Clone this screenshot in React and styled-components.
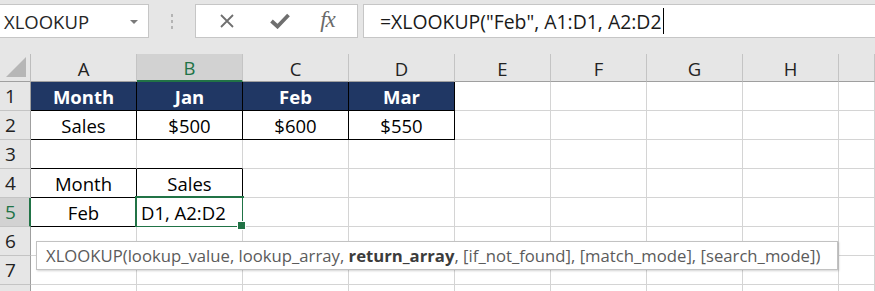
import React from "react"
import styled, { createGlobalStyle, css } from "styled-components"

const GREEN = "#217346"
const NAVY = "#203764"
const GRID = "#d4d4d4"
const HEAD_BG = "#e6e6e6"
const HEAD_SEL = "#d2d2d2"

const GlobalStyle = createGlobalStyle`
  body {
    margin: 0;
    background: #fff;
    font-family: "Open Sans", "Liberation Sans", sans-serif;
  }
  * { box-sizing: border-box; }
`

const Page = styled.div`
  position: relative;
  width: 875px;
  height: 291px;
  overflow: hidden;
  display: flex;
  flex-direction: column;
`

const FormulaBar = styled.div`
  height: 54px;
  flex: none;
  background: ${HEAD_BG};
  display: flex;
  align-items: flex-start;
  padding-top: 4px;
`

const NameBox = styled.div`
  width: 149px;
  height: 34px;
  background: #fff;
  border: 1px solid #c6c6c6;
  border-left: none;
  display: flex;
  align-items: center;
  justify-content: space-between;
  padding: 0 10px 0 4px;
  font-size: 18.5px;
  color: #262626;
`

const DropArrow = styled.span`
  width: 0;
  height: 0;
  border-left: 4px solid transparent;
  border-right: 4px solid transparent;
  border-top: 4px solid #7a7a7a;
  margin-top: 1px;
`

const Splitter = styled.div`
  width: 46px;
  height: 34px;
  display: flex;
  flex-direction: column;
  align-items: center;
  justify-content: center;
  gap: 3px;
`

const Dot = styled.span`
  width: 2px;
  height: 3px;
  background: #b4b4b4;
`

const IconBox = styled.div`
  width: 163px;
  height: 34px;
  background: #fff;
  border: 1px solid #c6c6c6;
  display: grid;
  grid-template-columns: 54px 52px 1fr;
  align-items: center;
  justify-items: center;
  padding-left: 4px;
`

const Fx = styled.span`
  font-family: "Liberation Serif", "DejaVu Serif", serif;
  font-style: italic;
  font-size: 23px;
  color: #6a6a6a;
  margin-left: -8px;
  margin-top: -2px;
  letter-spacing: -1px;
`

const FormulaInput = styled.div`
  flex: 1;
  height: 34px;
  margin-left: 5px;
  background: #fff;
  border: 1px solid #c6c6c6;
  border-right: none;
  display: flex;
  align-items: center;
  padding-left: 16px;
  font-size: 19.4px;
  color: #1a1a1a;
  white-space: pre;
`

const Caret = styled.span`
  width: 1px;
  height: 26px;
  background: #000;
  margin-left: 1px;
`

const Sheet = styled.div`
  display: grid;
  grid-template-columns: 31px repeat(4, 106px) repeat(4, 96px) 1fr;
  grid-template-rows: 28px;
  grid-auto-rows: 29px;
`

const Corner = styled.div`
  background: ${HEAD_BG};
  border-right: 1px solid #bdbdbd;
  border-bottom: 1px solid #9f9f9f;
  display: flex;
  align-items: flex-end;
  justify-content: flex-end;
  padding: 0 4px 4px 0;
`

const CornerTriangle = styled.span`
  width: 0;
  height: 0;
  border-left: 20px solid transparent;
  border-bottom: 20px solid #b6b6b6;
`

const ColHead = styled.div`
  background: ${(p) => (p.$selected ? HEAD_SEL : HEAD_BG)};
  color: ${(p) => (p.$selected ? GREEN : "#222")};
  border-right: 1px solid #c4c4c4;
  border-bottom: ${(p) => (p.$selected ? `2px solid ${GREEN}` : "1px solid #9f9f9f")};
  display: flex;
  align-items: center;
  justify-content: center;
  font-size: 18.5px;
  padding-top: 1px;
`

const RowHead = styled.div`
  background: ${(p) => (p.$selected ? HEAD_SEL : HEAD_BG)};
  color: ${(p) => (p.$selected ? GREEN : "#222")};
  border-right: ${(p) => (p.$selected ? `2px solid ${GREEN}` : "1px solid #9f9f9f")};
  border-bottom: 1px solid #c4c4c4;
  display: flex;
  align-items: center;
  padding-left: 5px;
  font-size: 19px;
`

const Cell = styled.div`
  position: relative;
  background: ${(p) => (p.$fill ? NAVY : "#fff")};
  color: ${(p) => (p.$fill ? "#fff" : "#000")};
  font-weight: ${(p) => (p.$bold ? 700 : 400)};
  border-right: 1px solid ${(p) => (p.$right ? "#000" : GRID)};
  border-bottom: 1px solid ${(p) => (p.$bottom ? "#000" : GRID)};
  display: flex;
  align-items: center;
  justify-content: ${(p) => (p.$left ? "flex-start" : "center")};
  padding-left: ${(p) => (p.$left ? "4px" : "0")};
  font-size: 18.5px;
  white-space: nowrap;

  ${(p) =>
    p.$active &&
    css`
      &::after {
        content: "";
        position: absolute;
        top: -2px;
        left: -2px;
        right: -2px;
        bottom: -2px;
        border: 2px solid ${GREEN};
      }
      &::before {
        content: "";
        position: absolute;
        right: -4px;
        bottom: -4px;
        width: 7px;
        height: 7px;
        background: ${GREEN};
        border: 1px solid #fff;
        z-index: 2;
      }
    `}
`

const Tooltip = styled.div`
  position: absolute;
  left: 36px;
  top: 241px;
  width: 802px;
  height: 29px;
  background: #fff;
  border: 1px solid #c2c2c2;
  box-shadow: 1px 1px 2px rgba(0, 0, 0, 0.18);
  display: flex;
  align-items: center;
  padding-left: 9px;
  font-size: 16.7px;
  color: #5b5b5b;
  white-space: pre;

  b {
    color: #3c3c3c;
  }
`

const columns = ["A", "B", "C", "D", "E", "F", "G", "H", ""]

// cell specs per row: text, fill, bold, right/bottom black borders, left aligned, active
const rows = [
  [
    { t: "Month", fill: true, bold: true, right: true, bottom: true },
    { t: "Jan", fill: true, bold: true, right: true, bottom: true },
    { t: "Feb", fill: true, bold: true, right: true, bottom: true },
    { t: "Mar", fill: true, bold: true, right: true, bottom: true },
  ],
  [
    { t: "Sales", right: true, bottom: true },
    { t: "$500", right: true, bottom: true },
    { t: "$600", right: true, bottom: true },
    { t: "$550", right: true, bottom: true },
  ],
  [{ bottom: true }, { bottom: true }],
  [
    { t: "Month", right: true, bottom: true },
    { t: "Sales", right: true, bottom: true },
  ],
  [
    { t: "Feb", right: true, bottom: true },
    { t: "D1, A2:D2", right: true, bottom: true, left: true, active: true },
  ],
  [],
  [],
  [],
]

// the last row only peeks in at the bottom edge, so its number is not shown
const VISIBLE_ROW_LABELS = 7

const CrossIcon = () => (
  <svg width="16" height="16" viewBox="0 0 16 16">
    <path d="M2 2 L14 14 M14 2 L2 14" stroke="#6f6f6f" strokeWidth="1.8" fill="none" />
  </svg>
)

const CheckIcon = () => (
  <svg width="20" height="16" viewBox="0 0 20 16">
    <path d="M1.5 8 L7.5 13.5 L18.5 2" stroke="#6f6f6f" strokeWidth="3.8" fill="none" />
  </svg>
)

const App = () => (
  <Page>
    <GlobalStyle />

    <FormulaBar>
      <NameBox>
        XLOOKUP
        <DropArrow />
      </NameBox>
      <Splitter>
        <Dot />
        <Dot />
        <Dot />
      </Splitter>
      <IconBox>
        <CrossIcon />
        <CheckIcon />
        <Fx>fx</Fx>
      </IconBox>
      <FormulaInput>
        =XLOOKUP("Feb", A1:D1, A2:D2
        <Caret />
      </FormulaInput>
    </FormulaBar>

    <Sheet>
      <Corner>
        <CornerTriangle />
      </Corner>
      {columns.map((c, i) => (
        <ColHead key={i} $selected={c === "B"}>{c}</ColHead>
      ))}

      {rows.map((cells, r) => (
        <React.Fragment key={r}>
          <RowHead $selected={r === 4}>{r < VISIBLE_ROW_LABELS ? r + 1 : ""}</RowHead>
          {columns.map((_, c) => {
            const spec = cells[c] || {}
            return (
              <Cell
                key={c}
                $fill={spec.fill}
                $bold={spec.bold}
                $right={spec.right}
                $bottom={spec.bottom}
                $left={spec.left}
                $active={spec.active}
              >
                {spec.t}
              </Cell>
            )
          })}
        </React.Fragment>
      ))}
    </Sheet>

    <Tooltip>
      XLOOKUP(lookup_value, lookup_array, <b>return_array</b>, [if_not_found], [match_mode], [search_mode])
    </Tooltip>
  </Page>
)

export default App
